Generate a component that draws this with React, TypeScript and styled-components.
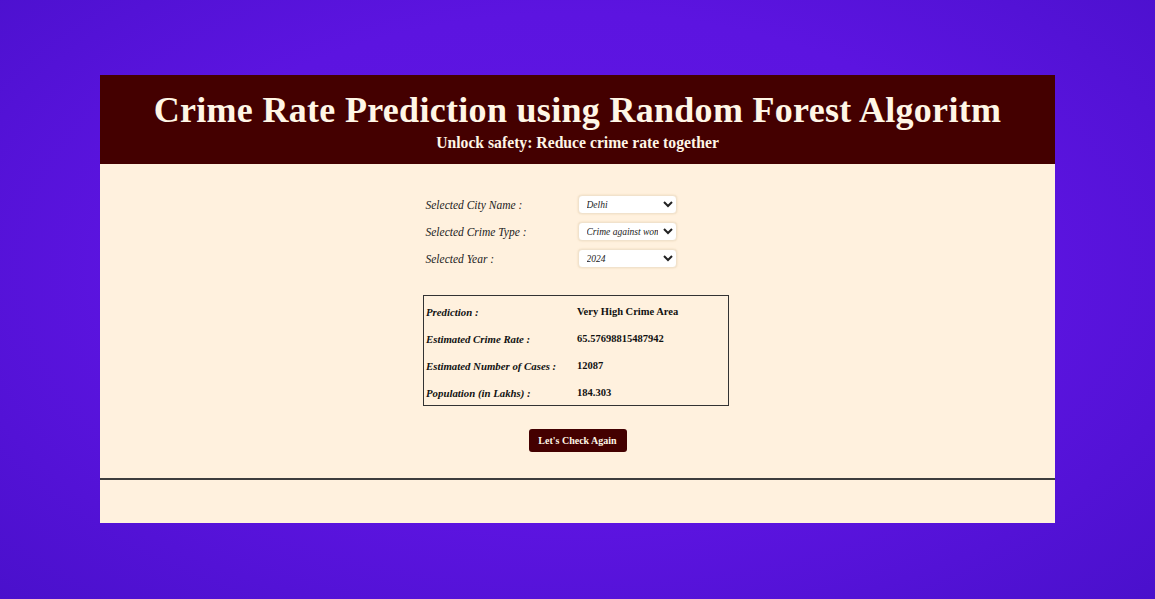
import * as React from "react";
import styled, { createGlobalStyle } from "styled-components";

const GlobalStyle = createGlobalStyle`
  html, body {
    margin: 0;
    padding: 0;
  }
  body {
    width: 1155px;
    height: 599px;
    overflow: hidden;
    background: radial-gradient(ellipse at 50% 45%, #6016e4 0%, #5c14e0 55%, #4a10cc 100%);
    font-family: "Liberation Serif", "DejaVu Serif", serif;
  }
`;

const Stage = styled.div`
  padding: 75px 100px 0;
`;

const Card = styled.div`
  background: #fff1de;
  height: 448px;
  display: flex;
  flex-direction: column;
`;

const Header = styled.header`
  background: #440000;
  height: 89px;
  flex-shrink: 0;
  display: flex;
  flex-direction: column;
  align-items: center;
  color: #fff6e6;
`;

const Title = styled.h1`
  margin: 15px 0 0;
  font-size: 36px;
  font-weight: 700;
  line-height: 40px;
  letter-spacing: 0.3px;
`;

const Subtitle = styled.h2`
  margin: 3px 0 0;
  font-size: 15.7px;
  font-weight: 700;
  line-height: 20px;
`;

const Main = styled.main`
  display: flex;
  flex-direction: column;
  align-items: center;
  padding-top: 31px;
  height: 316px;
  flex-shrink: 0;
  box-sizing: border-box;
  border-bottom: 2px solid #3d3d3d;
`;

const Form = styled.div`
  display: grid;
  grid-template-columns: 152px 99px;
  row-gap: 8px;
  width: 304px;
  align-items: center;
`;

const Label = styled.label`
  font-size: 11.5px;
  font-style: italic;
  color: #222;
`;

const Select = styled.select`
  width: 99px;
  height: 19px;
  font-family: "Liberation Serif", serif;
  font-style: italic;
  font-size: 9.5px;
  color: #222;
  background: #fff;
  border: 1px solid #f1e2cc;
  border-radius: 4px;
  padding: 0 2px 0 4px;
  box-shadow: 0 0 2px rgba(200, 170, 120, 0.4);
`;

const ResultBox = styled.div`
  margin-top: 27px;
  margin-right: 3px;
  width: 306px;
  height: 111px;
  box-sizing: border-box;
  border: 1.5px solid #333;
  display: grid;
  grid-template-columns: 151px 1fr;
  grid-auto-rows: 27px;
  padding-top: 2px;
  padding-left: 2px;
  align-items: center;
`;

const Cell = styled.div<{ $key?: boolean }>`
  font-size: ${(p) => (p.$key ? "10.8px" : "10.5px")};
  font-weight: 700;
  font-style: ${(p) => (p.$key ? "italic" : "normal")};
  color: #111;
`;

const Button = styled.button`
  margin-top: 23px;
  width: 98px;
  height: 23px;
  flex-shrink: 0;
  border: none;
  border-radius: 3px;
  background: #440000;
  color: #fff6e6;
  font-family: "Liberation Serif", serif;
  font-weight: 700;
  font-size: 10px;
  cursor: pointer;
`;

const fields = [
  { label: "Selected City Name :", options: ["Delhi"] },
  { label: "Selected Crime Type :", options: ["Crime against women"] },
  { label: "Selected Year :", options: ["2024"] },
];

const results = [
  ["Prediction :", "Very High Crime Area"],
  ["Estimated Crime Rate :", "65.57698815487942"],
  ["Estimated Number of Cases :", "12087"],
  ["Population (in Lakhs) :", "184.303"],
];

export default function App() {
  return (
    <>
      <GlobalStyle />
      <Stage>
        <Card>
          <Header>
            <Title>Crime Rate Prediction using Random Forest Algoritm</Title>
            <Subtitle>Unlock safety: Reduce crime rate together</Subtitle>
          </Header>
          <Main>
            <Form>
              {fields.map((f) => (
                <React.Fragment key={f.label}>
                  <Label>{f.label}</Label>
                  <Select defaultValue={f.options[0]}>
                    {f.options.map((o) => (
                      <option key={o}>{o}</option>
                    ))}
                  </Select>
                </React.Fragment>
              ))}
            </Form>
            <ResultBox>
              {results.map(([k, v]) => (
                <React.Fragment key={k}>
                  <Cell $key>{k}</Cell>
                  <Cell>{v}</Cell>
                </React.Fragment>
              ))}
            </ResultBox>
            <Button>Let's Check Again</Button>
          </Main>
        </Card>
      </Stage>
    </>
  );
}
